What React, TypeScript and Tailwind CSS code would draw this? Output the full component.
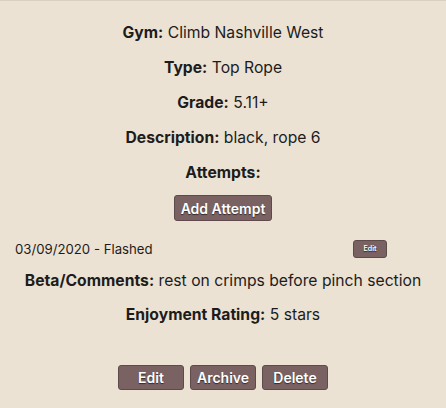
const Btn = ({ label, className }: { label: string; className: string }) => (
  <button
    className={`bg-[#7a6263] border border-[#5f4a4b] rounded-[3px] text-white font-semibold [text-shadow:0_1px_1px_rgba(0,0,0,0.6)] ${className}`}
  >
    {label}
  </button>
);

const Field = ({ label, value, className = "" }: { label: string; value: string; className?: string }) => (
  <p className={`text-[15.7px] leading-[19px] ${className}`}>
    <span className="font-bold">{label}</span> {value}
  </p>
);

export default function App() {
  return (
    <div className="min-h-screen bg-[#ece2d3] border-t border-[#d8cfc1] font-['Inter',sans-serif] text-[#1c1c1c]">
      <div className="pt-[22px] text-center">
        <Field label="Gym:" value="Climb Nashville West" />
        <Field label="Type:" value="Top Rope" className="mt-4" />
        <Field label="Grade:" value="5.11+" className="mt-4" />
        <Field label="Description:" value="black, rope 6" className="mt-4" />
        <p className="mt-4 text-[15.7px] leading-[19px] font-bold">Attempts:</p>
        <Btn label="Add Attempt" className="mt-[13px] h-[26px] w-[98px] text-[14px]" />
      </div>

      <div className="mt-[19px] flex items-center justify-between pl-[15px] pr-[59px]">
        <span className="text-[13.2px] leading-[18px]">03/09/2020 - Flashed</span>
        <Btn label="Edit" className="h-[18px] w-[34px] text-[7px]" />
      </div>

      <div className="text-center">
        <Field label="Beta/Comments:" value="rest on crimps before pinch section" className="mt-[13px]" />
        <Field label="Enjoyment Rating:" value="5 stars" className="mt-[15px]" />
        <div className="mt-[41px] flex justify-center gap-[6px]">
          <Btn label="Edit" className="h-[25px] w-[66px] text-[14px]" />
          <Btn label="Archive" className="h-[25px] w-[66px] text-[14px]" />
          <Btn label="Delete" className="h-[25px] w-[66px] text-[14px]" />
        </div>
      </div>
    </div>
  );
}
